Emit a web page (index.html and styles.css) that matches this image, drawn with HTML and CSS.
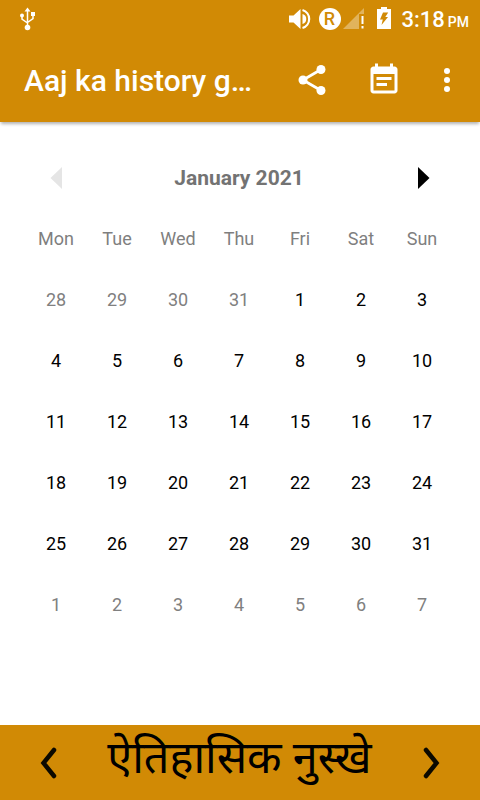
FILE: index.html
```html
<!DOCTYPE html>
<html lang="en">
<head>
    <meta charset="UTF-8">
    <meta name="viewport" content="width=device-width, initial-scale=1.0">
    <title>Aaj ka history gk</title>
    <link rel="stylesheet" href="styles.css">
</head>
<body>
    <div class="app">
        <div class="status-bar">
            <svg class="usb" width="18" height="26" viewBox="0 0 18 26" fill="#fff">
                <path d="M8.500 1.500l3 4h-6zM12 6h4v4h-4z"/>
                <circle cx="8.500" cy="21.500" r="2.800"/>
                <circle cx="3" cy="9.500" r="2"/>
                <path d="M8.500 4v17M3 10v3l5.500 4M14 9v3.500l-5.500 4" fill="none" stroke="#fff" stroke-width="1.500"/>
            </svg>
            <svg class="volume" width="24" height="24" viewBox="0 0 24 24">
                <path d="M0 8.500h4.500L11.500 2v20l-7-6.500H0z" fill="#fff"/>
                <path d="M13.500 7a5.200 5.200 0 0 1 0 10z" fill="#fff"/>
                <path d="M13.500 3a9.400 9.400 0 0 1 0 18" fill="none" stroke="#fff" stroke-width="2.200"/>
            </svg>
            <span class="roaming">R</span>
            <svg class="signal" width="22" height="22" viewBox="0 0 22 22">
                <path d="M0 21L21 0v6h-5v15z" fill="#fff" fill-opacity=".35"/>
                <path d="M18.500 8h2v8h-2zM18.500 18h2v2.500h-2z" fill="#fff"/>
            </svg>
            <svg class="battery" width="14" height="22" viewBox="0 0 14 22">
                <path d="M0 2h4V0h6v2h4v20H0z" fill="#fff"/>
                <path d="M6 5.500h5.200L8.300 10H11L4.500 18l1.300-5.500H3z" fill="#d18a05"/>
            </svg>
            <span class="time">3:18</span>
            <span class="ampm">PM</span>
        </div>

        <header class="toolbar">
            <h1>Aaj ka history g…</h1>
            <svg class="share" width="36" height="36" viewBox="0 0 24 24" fill="#fff">
                <path d="M6 12L18 5M6 12l12 7" stroke="#fff" stroke-width="1.800"/>
                <circle cx="18" cy="5" r="3"/>
                <circle cx="6" cy="12" r="3"/>
                <circle cx="18" cy="19" r="3"/>
            </svg>
            <svg class="event" width="36" height="36" viewBox="0 0 24 24" fill="#fff">
                <path d="M17 10H7v2h10v-2zm2-7h-1V1h-2v2H8V1H6v2H5c-1.110 0-2 .9-2 2v14c0 1.100.89 2 2 2h14c1.100 0 2-.9 2-2V5c0-1.100-.9-2-2-2zm0 16H5V8h14v11zm-5-5H7v2h7v-2z"/>
            </svg>
            <svg class="more" width="36" height="36" viewBox="0 0 24 24" fill="#fff">
                <circle cx="12" cy="6" r="2"/>
                <circle cx="12" cy="12" r="2"/>
                <circle cx="12" cy="18" r="2"/>
            </svg>
        </header>

        <main class="calendar">
            <div class="month-bar">
                <svg class="prev" width="12" height="22" viewBox="0 0 12 22"><path d="M12 0v22L.5 11z" fill="#e5e5e5"/></svg>
                <h2>January 2021</h2>
                <svg class="next" width="12" height="22" viewBox="0 0 12 22"><path d="M0 0v22l11.500-11z" fill="#000"/></svg>
            </div>
            <div class="days" id="days"></div>
        </main>

        <footer class="bottom-bar">
            <svg width="18" height="32" viewBox="0 0 18 32"><path d="M14 3L3.500 16 14 29" fill="none" stroke="#0c0900" stroke-width="4.500" stroke-linecap="round"/></svg>
            <span class="label" lang="hi">ऐतिहासिक नुस्खे</span>
            <svg width="18" height="32" viewBox="0 0 18 32"><path d="M4 3l10.500 13L4 29" fill="none" stroke="#0c0900" stroke-width="4.500" stroke-linecap="round"/></svg>
        </footer>
    </div>

    <script>
        const weekdays = ['Mon', 'Tue', 'Wed', 'Thu', 'Fri', 'Sat', 'Sun'];
        const year = 2021;
        const month = 0;

        // Six weeks starting on the Monday before the 1st
        function renderDays() {
            const first = new Date(year, month, 1);
            const offset = (first.getDay() + 6) % 7;
            let html = weekdays.map(day => `<div class="weekday">${day}</div>`).join('');

            for (let i = 0; i < 42; i++) {
                const date = new Date(year, month, 1 - offset + i);
                const cls = date.getMonth() === month ? 'day' : 'day other';
                html += `<div class="${cls}">${date.getDate()}</div>`;
            }

            document.getElementById('days').innerHTML = html;
        }

        renderDays();
    </script>
</body>
</html>
```
FILE: styles.css
```css
* {
    margin: 0;
    padding: 0;
    box-sizing: border-box;
}

body {
    font-family: Roboto, 'Noto Sans', sans-serif;
    background: #fff;
    color: #000;
}

svg {
    display: block;
    flex: none;
}

.app {
    display: flex;
    flex-direction: column;
    height: 800px;
    width: 480px;
    overflow: hidden;
}

.status-bar {
    height: 38px;
    flex: none;
    display: flex;
    align-items: center;
    padding: 0 11px 0 19px;
    background: #d18a05;
    color: #fff;
}

.volume {
    margin-left: auto;
}

.roaming {
    width: 22px;
    height: 22px;
    margin-left: 6px;
    border-radius: 50%;
    background: #fff;
    color: #d18a05;
    font-size: 18px;
    font-weight: 500;
    line-height: 22px;
    text-align: center;
}

.signal {
    margin-left: 2px;
}

.battery {
    margin: 0 11px 2px 12px;
}

.time {
    font-size: 22px;
    font-weight: 500;
}

.ampm {
    margin: 5px 0 0 3px;
    font-size: 14px;
    font-weight: 500;
}

.toolbar {
    height: 84px;
    flex: none;
    display: flex;
    align-items: center;
    padding: 0 15px 0 24px;
    background: #d18a05;
    color: #fff;
    box-shadow: 0 3px 3px -1px rgba(0, 0, 0, 0.3);
}

.toolbar h1 {
    flex: 1;
    font-size: 30px;
    font-weight: 500;
    white-space: nowrap;
}

.event {
    margin: 0 27px 0 36px;
}

.calendar {
    flex: 1;
    width: 428px;
    margin: 0 26.5px 0 25.5px;
    padding-top: 25px;
}

.month-bar {
    height: 61px;
    display: flex;
    align-items: center;
    justify-content: space-between;
    padding: 0 23.5px 0 24.5px;
}

.month-bar h2 {
    margin-right: 2px;
    font-size: 21px;
    font-weight: 700;
    color: #737373;
}

.days {
    display: grid;
    grid-template-columns: repeat(7, 61px);
    grid-auto-rows: 61px;
    font-size: 18px;
    line-height: 61px;
    text-align: center;
}

.weekday {
    color: #7f7f7f;
}

.day.other {
    color: #808080;
}

.bottom-bar {
    height: 75px;
    flex: none;
    display: flex;
    align-items: center;
    justify-content: space-between;
    padding: 0 40px;
    background: #d18a05;
}

.label {
    margin: -10px 1px 0 0;
    font-size: 45px;
    line-height: 75px;
    white-space: nowrap;
}
```
